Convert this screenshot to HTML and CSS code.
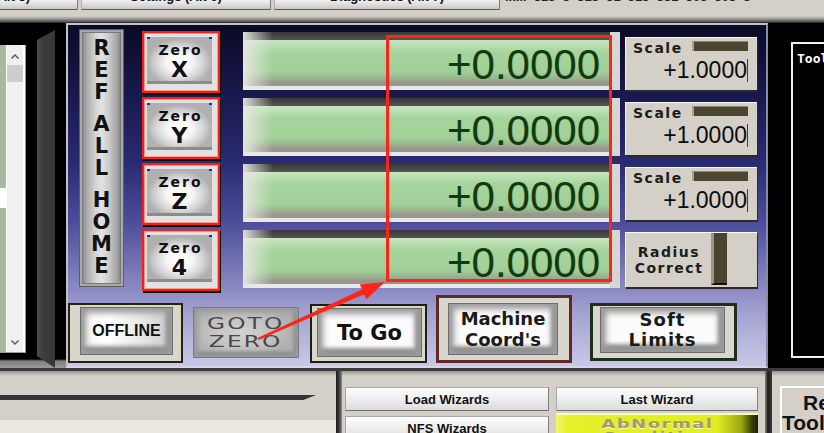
FILE: index.html
```html
<!DOCTYPE html>
<html>
<head>
<meta charset="utf-8">
<title>Mach3 DRO</title>
<link rel="stylesheet" href="styles.css">
</head>
<body>
<div class="screen">
  <div class="tabs">
    <div class="tab tab-a"><span>Program Run (Alt 5)</span></div>
    <div class="tab tab-b"><span>Settings (Alt 6)</span></div>
    <div class="tab tab-c"><span>Diagnostics (Alt 7)</span></div>
    <div class="tab-rest"><span>...... &nbsp;313 &nbsp;3 &nbsp;313 &nbsp;31 &nbsp;313 &nbsp;331 &nbsp;303 &nbsp;303 &nbsp;3</span></div>
  </div>
  <div class="band"></div>

  <div class="middle">
    <div class="left">
      <div class="listbox">
        <div class="list"><div class="l-a"></div><div class="l-sel"></div><div class="l-b"></div></div>
        <div class="scrollbar">
          <div class="sb-up"><svg width="8" height="5" viewBox="0 0 8 5"><polyline points="0.5,4.5 4,1 7.5,4.5" fill="none" stroke="#555" stroke-width="1.4"/></svg></div>
          <div class="thumb"></div>
          <div class="sb-fill"></div>
          <div class="sb-down"><svg width="8" height="5" viewBox="0 0 8 5"><polyline points="0.5,0.5 4,4 7.5,0.5" fill="none" stroke="#555" stroke-width="1.4"/></svg></div>
        </div>
      </div>
      <div class="bevel"></div>
    </div>

    <div class="main">
      <div class="axes">
        <div class="refhome">
          <span>R</span><span>E</span><span>F</span><i class="gap"></i>
          <span>A</span><span>L</span><span>L</span><i class="gap"></i>
          <span>H</span><span>O</span><span>M</span><span>E</span>
        </div>
        <div class="zeros">
          <div class="zero"><div class="zero-face"><span class="zero-t">Zero</span><span class="zero-a">X</span></div></div>
          <div class="zero"><div class="zero-face"><span class="zero-t">Zero</span><span class="zero-a">Y</span></div></div>
          <div class="zero"><div class="zero-face"><span class="zero-t">Zero</span><span class="zero-a">Z</span></div></div>
          <div class="zero"><div class="zero-face"><span class="zero-t">Zero</span><span class="zero-a">4</span></div></div>
        </div>
        <div class="dros">
          <div class="dro"><span>+0.0000</span></div>
          <div class="dro"><span>+0.0000</span></div>
          <div class="dro"><span>+0.0000</span></div>
          <div class="dro"><span>+0.0000</span></div>
        </div>
        <div class="scales">
          <div class="scale"><div class="scale-top"><span class="scale-label">Scale</span><span class="led"></span></div><div class="scale-val"><span>+1.0000</span></div></div>
          <div class="scale"><div class="scale-top"><span class="scale-label">Scale</span><span class="led"></span></div><div class="scale-val"><span>+1.0000</span></div></div>
          <div class="scale"><div class="scale-top"><span class="scale-label">Scale</span><span class="led"></span></div><div class="scale-val"><span>+1.0000</span></div></div>
          <div class="radius"><div class="radius-t">Radius<br>Correct</div><span class="led-v"></span></div>
        </div>
      </div>
      <div class="actions">
        <div class="frame offline"><div class="face face-side"><span>OFFLINE</span></div></div>
        <div class="goto"><span>GOTO<br>ZERO</span></div>
        <div class="frame togo"><div class="face"><span>To Go</span></div></div>
        <div class="frame machine"><div class="face"><span>Machine<br>Coord's</span></div></div>
        <div class="frame soft"><div class="face"><span>Soft<br>Limits</span></div></div>
      </div>
    </div>

    <div class="right">
      <div class="toolpath">Tool Path</div>
    </div>
  </div>

  <div class="bottom">
    <div class="b-left"><div class="b-line"></div><div class="b-low"></div></div>
    <div class="b-sep"></div>
    <div class="b-mid">
      <div class="wbtn">Load Wizards</div>
      <div class="wbtn">Last Wizard</div>
      <div class="wbtn">NFS Wizards</div>
      <div class="abnormal"><span>AbNormal<br>Condition</span></div>
    </div>
    <div class="b-sep2"></div>
    <div class="b-right"><div class="regen"><span class="r1">Regen.</span><br>Toolpath</div></div>
  </div>

  <div class="annot-box"></div>
  <svg class="annot-arrow" width="824" height="433" viewBox="0 0 824 433">
    <polygon points="257.5,337.9 362.1,289.6 359.8,284.6 385,282 366.4,299.2 364.1,294.2 258.5,340.1" fill="#ff2418"/>
  </svg>
</div>
</body>
</html>
```
FILE: styles.css
```css
* { box-sizing: border-box; margin: 0; padding: 0; }
html, body { width: 824px; height: 433px; overflow: hidden; }
body { background: #d4d0c8; font-family: "Liberation Sans", Arial, sans-serif; color: #000; }
.screen { position: relative; width: 824px; height: 433px; overflow: hidden; display: flex; flex-direction: column; }

/* top tabs */
.tabs { flex: none; height: 10px; display: flex; gap: 3px; overflow: hidden; background: #d4d0c8; }
.tab { flex: none; height: 10px; overflow: hidden; display: flex; justify-content: center;
  background: linear-gradient(#f0f0f0, #dadada 60%, #c6c6c6);
  border-left: 1px solid #b0b0b0; border-right: 1px solid #7a7a7a; border-bottom: 1px solid #5c5c5c;
  font-weight: bold; font-size: 13px; white-space: nowrap; color: #111; }
.tab span, .tab-rest span { display: block; flex: none; line-height: 13px; margin-top: -10px; }
.tab-a { width: 78px; justify-content: flex-end; padding-right: 47px; border-left: none; }
.tab-b { width: 190px; }
.tab-c { width: 226px; }
.tab-rest { flex: 1; overflow: hidden; margin-left: 2px; font-weight: bold; font-size: 13px; white-space: nowrap; color: #222; }

.band { flex: none; height: 13px; background: linear-gradient(#d4d0c8 0, #d4d0c8 6px, #9a9894 9px, #4a4a4a 12px, #1a1a1a 13px); }

/* middle */
.middle { flex: none; height: 345px; display: flex; background: #000; }
.left { flex: none; width: 66px; display: flex; align-items: flex-start;
  background: linear-gradient(#000 0, #000 336px, #7e7e7e 338px, #9a9a9a 345px); }
.listbox { flex: none; width: 26px; height: 308px; margin-top: 22px; display: flex; background: #fff;
  border-right: 1px solid #9c9c9c; border-bottom: 1px solid #9c9c9c; }
.list { width: 6px; height: 100%; display: flex; flex-direction: column; }
.l-a { height: 143px; background: #a9b8a1; }
.l-sel { height: 20px; background: #fff; }
.l-b { flex: 1; background: #a9b8a1; }
.scrollbar { width: 16px; margin-left: 1px; background: #f0f0f0; display: flex; flex-direction: column; align-items: center; }
.sb-up { height: 20px; padding-top: 9px; }
.sb-up svg, .sb-down svg { display: block; }
.thumb { width: 16px; height: 17px; background: #cdcdcd; }
.sb-fill { flex: 1; }
.sb-down { height: 20px; padding-top: 8px; }
.bevel { flex: none; width: 18px; height: 338px; margin-left: 11px; margin-top: 7px;
  background: linear-gradient(to right, #4c4c4c, #3c3c3c 35%, #363636);
  clip-path: polygon(0 10px, 100% 0, 100% 100%, 0 calc(100% - 12px)); }

.main { flex: none; width: 702px; border: 2px solid #c2c2cc; border-right-color: #8a8aac; border-bottom-color: #d6d6e6;
  background: linear-gradient(#0a0a26 0%, #1a1a50 22%, #2a2a72 40%, #4a4a98 57%, #8c8cc4 78%, #a4a4d2 85%, #c8c8e8 100%); }

.axes { display: flex; align-items: flex-start; height: 268px; padding: 4px 0 0 11px; }

.refhome { flex: none; width: 45px; height: 258px; display: flex; flex-direction: column; align-items: center; padding-top: 7px;
  border: 1px solid #5e5e5e; box-shadow: inset 0 0 0 2px #a8a8a8, inset 0 0 0 3px #7a7a7a;
  background: linear-gradient(to right, #707070 0, #a6a6a6 14%, #d4d4d4 36%, #e2e2e2 50%, #cecece 66%, #a0a0a0 88%, #6a6a6a 100%); }
.refhome span { display: block; height: 22px; font: bold 21px/22px "DejaVu Sans", sans-serif; color: #111; }
.refhome .gap { display: block; height: 10px; }

.zeros { flex: none; width: 78px; margin-left: 18px; margin-top: 2px; display: flex; flex-direction: column; gap: 4px; }
.zero { height: 62px; border: 2px solid #ff1a12; box-shadow: 1px 2px 0 #000, inset 0 0 0 1px #ff9a90;
  background: #e2e2e2; padding: 4px 6px 7px 3px; }
.zero-face { height: 100%; display: flex; flex-direction: column; align-items: center; padding-top: 6px;
  background:
    linear-gradient(#1830b0, #1830b0) 0 0 / 3px 2px no-repeat,
    linear-gradient(#1830b0, #1830b0) 100% 0 / 3px 2px no-repeat,
    linear-gradient(#1830b0, #1830b0) 0 100% / 3px 2px no-repeat,
    linear-gradient(#1830b0, #1830b0) 100% 100% / 3px 2px no-repeat,
    radial-gradient(ellipse 50% 50% at 50% 54%, #ffffff 0%, #f6f6f6 40%, #d2d2d2 75%, #b0b0b0 100%), #a6a6a6;
  box-shadow: inset 0 -3px 0 #8c8c8c; }
.zero-t { display: block; font: bold 14px/14px "DejaVu Sans", sans-serif; letter-spacing: 2px; margin-left: 2px; color: #111; }
.zero-a { display: block; margin-top: 3px; font: bold 22px/20px "DejaVu Sans", sans-serif; color: #111; }

.dros { flex: none; width: 377px; margin-left: 23px; margin-top: 3px; display: flex; flex-direction: column; gap: 8px; }
.dro { height: 58px; display: flex; justify-content: flex-end; align-items: center; padding: 8px 10px 0 0;
  border-right: 10px solid #d6d6d6;
  background:
    linear-gradient(to right, rgba(232,232,226,0.95) 0, rgba(232,232,226,0) 30px),
    linear-gradient(#383838 0, #545454 8px, #c8e6c0 8px, #a6d49e 20px, #a0d098 40px, #98ac8e 48px, #9a968c 50px, #9a968c 54px, #e8e8e8 54px, #e8e8e8 58px); }
.dro span { font: 42px/42px "Liberation Sans", Arial, sans-serif; color: #0e3c10; text-shadow: 1px 0 0 rgba(150,150,40,0.35); }

.scales { flex: none; width: 132px; margin-left: 5px; margin-top: 8px; display: flex; flex-direction: column; gap: 12px; }
.scale { height: 53px; background: #d4d0c8; border-top: 1px solid #fafafa; border-left: 1px solid #f4f4f4;
  box-shadow: 1px 2px 0 #2a2a2a; padding: 3px 0 0 7px; }
.scale-top { display: flex; align-items: flex-start; height: 14px; }
.scale-label { font: bold 14px/14px "DejaVu Sans", sans-serif; letter-spacing: 1.5px; color: #1c1c1c; }
.led { margin-left: auto; margin-right: 9px; width: 56px; height: 10px; background: #4a4630;
  border-left: 2px solid #a8a494; border-top: 1px solid #8a8674; }
.scale-val { display: flex; justify-content: flex-end; margin-top: 4px; padding-right: 9px; }
.scale-val span { font: 23px/23px "Liberation Sans", Arial, sans-serif; color: #0a0a0a; border-right: 1px solid #1c3ca8; }

.radius { height: 55px; display: flex; align-items: flex-start; background: #d4d0c8; border-top: 1px solid #fafafa;
  border-left: 1px solid #f4f4f4; box-shadow: 1px 2px 0 #2a2a2a; }
.radius-t { align-self: center; width: 72px; margin-left: 7px; text-align: center;
  font: bold 14px/16px "DejaVu Sans", sans-serif; letter-spacing: 1.5px; color: #1c1c1c; }
.led-v { margin-left: auto; margin-right: 30px; width: 16px; height: 52px; background: #48442e;
  border-left: 3px solid #9a9884; border-bottom: 2px solid #111; }

/* action buttons */
.actions { display: flex; align-items: flex-end; height: 70px; }
.frame { flex: none; display: flex; border-style: solid; background: #d9d6cc; }
.face { flex: 1; display: flex; align-items: center; justify-content: center; text-align: center; background: #fbfbfb;
  box-shadow: inset 0 0 0 1px #6e6e6e, inset 0 0 6px 6px #9c9c9c, inset -2px -4px 4px 4px #7a7a7a; }
.face-side { background: linear-gradient(to right, #f4f4f4 0%, #ffffff 30%, #e4e4e4 70%, #c8c8c8 100%); }
.offline { width: 115px; height: 60px; border-width: 2px; border-color: #23230f; padding: 2px 8px 6px 10px; }
.offline span { font: bold 16px/16px "Liberation Sans", Arial, sans-serif; color: #111; }
.goto { flex: none; margin-left: 10px; margin-bottom: 5px; width: 106px; height: 51px; display: flex; align-items: center; justify-content: center;
  background: radial-gradient(ellipse 50% 50% at 45% 50%, #d2d2d2 0%, #c2c2c2 60%, #b0b0b0 100%);
  box-shadow: inset 0 0 0 1px #7a7a7a, inset 0 0 5px 5px #9a9a9a, inset -2px -3px 3px 3px #858585; }
.goto span { display: inline-block; text-align: center; font: 16px/18px "DejaVu Sans", sans-serif; letter-spacing: 1.5px;
  color: #474747; transform: scaleX(1.45); }
.togo { margin-left: 11px; width: 117px; height: 59px; border-width: 2px; border-color: #1e1e16; padding: 2px 3px 4px 5px; }
.togo span { font: bold 21px/22px "DejaVu Sans", sans-serif; color: #111; }
.machine { margin-left: 9px; width: 136px; height: 68px; border-width: 3px; border-color: #5e2a26; padding: 5px 11px 5px 9px; }
.machine span { font: bold 18px/21px "DejaVu Sans", sans-serif; color: #1a1a1a; }
.soft { margin-left: 18px; margin-bottom: 2px; width: 147px; height: 58px; border-width: 3px; border-color: #1e2e1c; padding: 1px 9px 5px 7px; }
.soft span { font: bold 18px/20px "DejaVu Sans", sans-serif; letter-spacing: 1px; color: #1a1a1a; }

/* right black area */
.right { flex: none; width: 56px; background: #000; padding: 19px 0 0 23px; overflow: hidden; }
.toolpath { width: 60px; height: 316px; border: 2px solid #f0f0f0; color: #fff; white-space: nowrap; overflow: hidden;
  font: bold 13px/15px "DejaVu Sans Mono", monospace; padding: 7px 0 0 4px; }

/* bottom strip */
.bottom { flex: none; height: 65px; display: flex; border-top: 3px solid #3c3c3c; background: linear-gradient(#9a9893 0, #d4d0c8 5px); }
.b-left { flex: none; width: 336px; display: flex; flex-direction: column; padding-top: 24px; }
.b-line { width: 316px; height: 5px; background: #353535; clip-path: polygon(0 0, 100% 0, 96% 100%, 0 100%); }
.b-low { margin-top: 20px; flex: 1; background: #ebe8e2; }
.b-sep { flex: none; width: 6px; background: linear-gradient(to right, #1c1c1c, #3c3c3c 50%, #8a8a8a); }
.b-mid { flex: none; width: 423px; padding: 16px 0 0 3px; display: grid; grid-template-columns: 204px 202px; column-gap: 7px; row-gap: 5px;
  grid-auto-rows: 24px; align-content: start; }
.wbtn { display: flex; align-items: center; justify-content: center; background: linear-gradient(#fdfdfd, #f0f0f0 45%, #dcdcdc);
  border: 1px solid #a8a8a8; border-bottom-color: #707070; border-right-color: #808080;
  font: bold 13px "Liberation Sans", Arial, sans-serif; color: #111; }
.abnormal { margin-top: -3px; height: 30px; overflow: hidden; text-align: center; padding-top: 3px; border-top: 2px solid #fbfcb0;
  background: linear-gradient(to right, #f2f66a 0%, #e8f02a 6%, #e2ec1e 80%, #9aa414 92%, #3a4008 97%, #1e2206 100%); }
.abnormal span { display: inline-block; font: bold 12px/13px "DejaVu Sans", sans-serif; letter-spacing: 1px; color: #a09a78;
  transform: scaleX(1.5); text-shadow: 0 1px 0 #fafad0; }
.b-sep2 { flex: none; width: 7px; background: linear-gradient(to right, #8a8a8a, #1c1c1c 40%, #3a3a3a); }
.b-right { flex: 1; padding: 15px 0 0 8px; overflow: hidden; }
.regen { width: 100px; height: 60px; border: 2px solid; border-color: #fff #5a5a5a #5a5a5a #fff; background: #d4d0c8;
  font: bold 21px/20px "Liberation Sans", Arial, sans-serif; padding: 5px 0 0 0; white-space: nowrap; color: #111; }
.regen .r1 { margin-left: 21px; }

/* annotations drawn over the screenshot */
.annot-box { position: absolute; left: 386px; top: 35px; width: 226px; height: 247px; border: 3px solid #ff2418; }
.annot-arrow { position: absolute; left: 0; top: 0; width: 824px; height: 433px; pointer-events: none; }
```
